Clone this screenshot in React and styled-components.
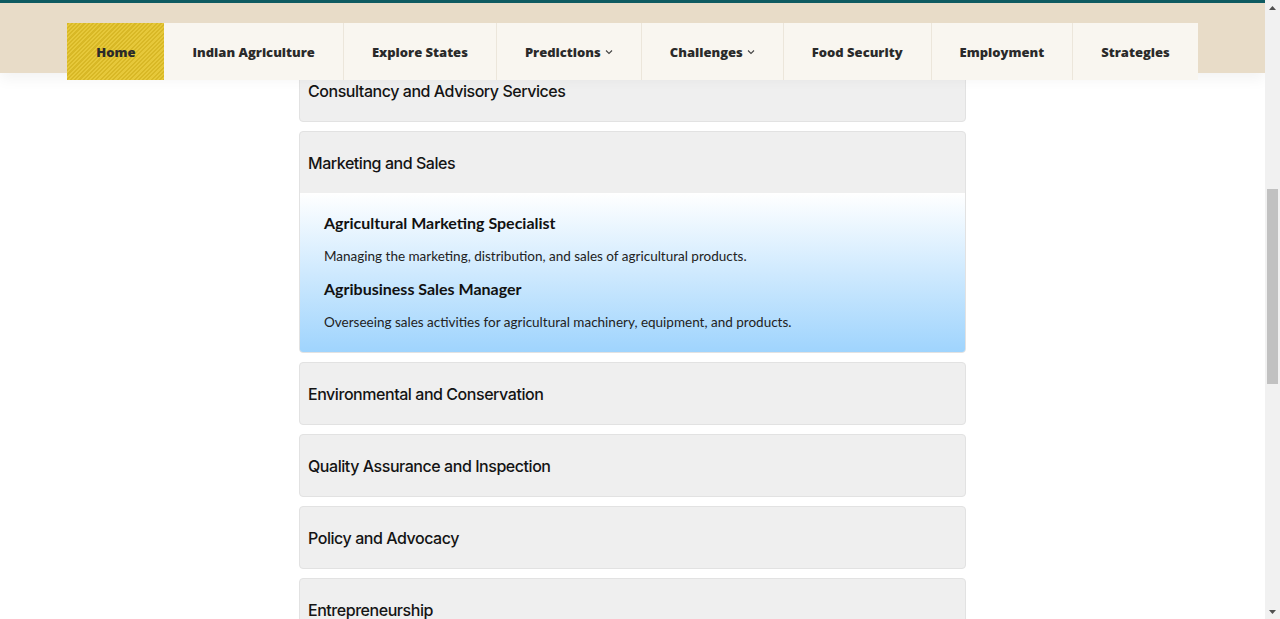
import React, { useLayoutEffect, useRef, useState } from "react";
import styled, { createGlobalStyle } from "styled-components";

const Global = createGlobalStyle`
  html, body { margin: 0; padding: 0; background: #ffffff; overflow: hidden; }
  body { font-family: "Open Sans", "Liberation Sans", sans-serif; color: #1f1f1f; }
  * { box-sizing: border-box; }
`;

const Shell = styled.div`
  height: 100vh;
  display: flex;
  overflow: hidden;
`;

const Viewport = styled.div`
  flex: 1;
  height: 100%;
  overflow-y: auto;
  scrollbar-width: none;
  &::-webkit-scrollbar { display: none; }
`;

const Page = styled.div`
  min-height: 1870px;
  display: flex;
  flex-direction: column;
`;

const ScrollBar = styled.div`
  width: 15px;
  height: 100%;
  background: #f1f1f1;
  display: flex;
  flex-direction: column;
`;

const Arrow = styled.div`
  height: 15px;
  flex: none;
  display: flex;
  align-items: center;
  justify-content: center;
`;

const Track = styled.div`
  flex: 1;
  position: relative;
`;

const Thumb = styled.div`
  position: absolute;
  left: 2px;
  right: 2px;
  background: #c1c1c1;
`;

const Header = styled.header`
  position: sticky;
  top: 0;
  z-index: 10;
  height: 73px;
  flex: none;
  background: #e8dcc8;
  border-top: 3px solid #0e5b61;
  box-shadow: 0 6px 14px rgba(0, 0, 0, 0.05);
  display: flex;
  justify-content: center;
  padding-top: 20px;
`;

const Nav = styled.nav`
  display: flex;
  height: 57px;
  align-self: flex-start;
`;

const NavItem = styled.a`
  display: flex;
  align-items: center;
  gap: 4px;
  height: 57px;
  padding: 0 ${(p) => (p.$active ? 29 : 28)}px;
  font-family: "Open Sans", sans-serif;
  font-weight: 800;
  font-size: 13px;
  color: #2a2a2a;
  text-decoration: none;
  white-space: nowrap;
  background: ${(p) =>
    p.$active
      ? "repeating-linear-gradient(135deg, #d8b826 0px, #d8b826 1.5px, #e6c83a 1.5px, #e6c83a 3px)"
      : "#f9f6f0"};
  border-left: ${(p) => (p.$noBorder ? "none" : "1px solid #ece6db")};
`;

const Chevron = () => (
  <svg width="8" height="6" viewBox="0 0 8 6" fill="none">
    <path d="M1 1.5L4 4.5L7 1.5" stroke="#444" strokeWidth="1.1" />
  </svg>
);

const Main = styled.main`
  width: 667px;
  margin: 0 auto;
  padding: 40px 0 60px;
  display: flex;
  flex-direction: column;
  gap: 9px;
`;

const Title = styled.h2`
  font-family: "Inter", sans-serif;
  font-size: 30px;
  font-weight: 700;
  margin: 0 0 20px;
  text-align: center;
`;

const Card = styled.section`
  background: #efefef;
  border: 1px solid #e2e2e2;
  border-radius: 4px;
  overflow: hidden;
`;

const CardHead = styled.div`
  height: 61px;
  display: flex;
  align-items: center;
  padding: 0 8px;
  font-family: "Inter", sans-serif;
  font-weight: 500;
  font-size: 16px;
  letter-spacing: -0.45px;
  color: #141414;
`;

const CardBody = styled.div`
  background: linear-gradient(180deg, #ffffff 0%, #9fd4fd 100%);
  padding: 19px 24px 20px;
  display: flex;
  flex-direction: column;
`;

const JobTitle = styled.h3`
  margin: 0;
  font-family: "Lato", sans-serif;
  font-weight: 700;
  font-size: 16px;
  line-height: 22px;
  color: #111;
`;

const JobDesc = styled.p`
  margin: 12px 0 12px;
  font-family: "Lato", sans-serif;
  font-size: 13.5px;
  line-height: 20px;
  color: #222;
  &:last-child { margin-bottom: 0; }
`;

const Footer = styled.footer`
  margin-top: auto;
  height: 200px;
  background: #e8dcc8;
`;

const navItems = [
  { label: "Home", active: true },
  { label: "Indian Agriculture" },
  { label: "Explore States" },
  { label: "Predictions", chevron: true },
  { label: "Challenges", chevron: true },
  { label: "Food Security" },
  { label: "Employment" },
  { label: "Strategies" },
];

const before = [
  "Farming and Crop Production",
  "Agricultural Research and Development",
  "Agricultural Engineering",
  "Agri-Technology and Innovation",
  "Livestock and Animal Husbandry",
  "Agricultural Education and Extension",
];

const after = [
  "Environmental and Conservation",
  "Quality Assurance and Inspection",
  "Policy and Advocacy",
  "Entrepreneurship",
  "Supply Chain and Logistics",
  "Financial Services",
  "Food Processing",
];

export default function App() {
  const viewRef = useRef(null);
  const cardRef = useRef(null);
  const trackRef = useRef(null);
  const [thumb, setThumb] = useState({ top: 0, height: 0 });

  useLayoutEffect(() => {
    const v = viewRef.current;
    const c = cardRef.current;
    const t = trackRef.current;
    if (!v || !c || !t) return;
    const offset = c.getBoundingClientRect().top - v.getBoundingClientRect().top + v.scrollTop;
    v.scrollTop = offset - 59;
    const trackH = t.clientHeight;
    const h = Math.max(20, (v.clientHeight / v.scrollHeight) * trackH);
    const top = (v.scrollTop / (v.scrollHeight - v.clientHeight)) * (trackH - h);
    setThumb({ top, height: h });
  }, []);

  return (
    <Shell>
      <Global />
      <Viewport ref={viewRef}>
        <Page>
          <Header>
            <Nav>
              {navItems.map((n, i) => (
                <NavItem key={n.label} href="#" $active={n.active} $noBorder={i < 2}>
                  {n.label}
                  {n.chevron && <Chevron />}
                </NavItem>
              ))}
            </Nav>
          </Header>
          <Main>
            <Title>Employment Opportunities in Agriculture</Title>
            {before.map((t) => (
              <Card key={t}>
                <CardHead>{t}</CardHead>
              </Card>
            ))}
            <Card ref={cardRef}>
              <CardHead>Consultancy and Advisory Services</CardHead>
            </Card>
            <Card>
              <CardHead>Marketing and Sales</CardHead>
              <CardBody>
                <JobTitle>Agricultural Marketing Specialist</JobTitle>
                <JobDesc>Managing the marketing, distribution, and sales of agricultural products.</JobDesc>
                <JobTitle>Agribusiness Sales Manager</JobTitle>
                <JobDesc>Overseeing sales activities for agricultural machinery, equipment, and products.</JobDesc>
              </CardBody>
            </Card>
            {after.map((t) => (
              <Card key={t}>
                <CardHead>{t}</CardHead>
              </Card>
            ))}
          </Main>
          <Footer />
        </Page>
      </Viewport>
      <ScrollBar>
        <Arrow>
          <svg width="7" height="4" viewBox="0 0 7 4"><path d="M0 4L3.5 0L7 4Z" fill="#505050" /></svg>
        </Arrow>
        <Track ref={trackRef}>
          <Thumb style={{ top: thumb.top, height: thumb.height }} />
        </Track>
        <Arrow>
          <svg width="7" height="4" viewBox="0 0 7 4"><path d="M0 0L3.5 4L7 0Z" fill="#505050" /></svg>
        </Arrow>
      </ScrollBar>
    </Shell>
  );
}
